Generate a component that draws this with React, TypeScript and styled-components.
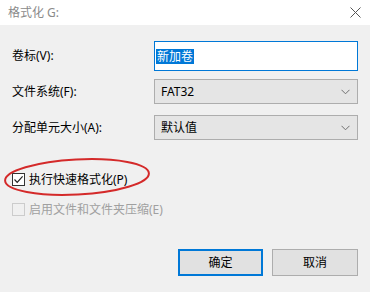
import React, {FC} from 'react';
import styled, {createGlobalStyle} from "styled-components";

const GlobalStyle = createGlobalStyle`
  html, body {
    margin: 0;
    padding: 0;
    background: #f0f0f0;
  }
  body {
    font-family: "Noto Sans", "Noto Sans CJK SC", sans-serif;
    font-size: 12px;
    color: #000;
  }
`

const Dialog = styled.div`
  position: relative;
  width: 370px;
  height: 292px;
  overflow: hidden;
  background: #f0f0f0;
`

const TitleBar = styled.div`
  height: 25px;
  background: #fff;
  display: flex;
  align-items: center;
  justify-content: space-between;
  padding: 0 9px 0 8px;
  color: #8a8a8a;
  font-size: 12px;
  line-height: 1;
`

const Content = styled.div`
  padding: 16px 12px 0 12px;
  display: flex;
  flex-direction: column;
`

const FieldRow = styled.div<{ $top: number, $h: number }>`
  display: grid;
  grid-template-columns: 142px 1fr;
  align-items: center;
  margin-top: ${p => p.$top}px;
  height: ${p => p.$h}px;
`

const Label = styled.span`
  line-height: 1;
`

const TextInput = styled.div`
  height: 30px;
  box-sizing: border-box;
  border: 1px solid #0078d7;
  background: #fff;
  display: flex;
  align-items: center;
  padding-left: 1px;
`

const Selected = styled.span`
  background: #0078d7;
  color: #fff;
  font-size: 12px;
  line-height: 15px;
  padding: 0 1px;
`

const Combo = styled.div`
  height: 25px;
  box-sizing: border-box;
  border: 1px solid #adadad;
  background: #e5e5e5;
  display: flex;
  align-items: center;
  justify-content: space-between;
  padding: 0 7px 0 6px;
  line-height: 1;
`

const CheckRow = styled.div<{ $top: number, $disabled?: boolean }>`
  display: flex;
  align-items: center;
  gap: 4px;
  margin-top: ${p => p.$top}px;
  color: ${p => p.$disabled ? '#a0a0a0' : '#000'};
  line-height: 1;
`

const Box = styled.span<{ $disabled?: boolean }>`
  width: 13px;
  height: 13px;
  box-sizing: border-box;
  border: 1px solid ${p => p.$disabled ? '#cccccc' : '#333'};
  background: ${p => p.$disabled ? '#f0f0f0' : '#fff'};
  display: flex;
  align-items: center;
  justify-content: center;
`

const Buttons = styled.div`
  display: flex;
  justify-content: flex-end;
  gap: 9px;
  margin-top: 33px;
`

const Button = styled.div<{ $primary?: boolean }>`
  width: ${p => p.$primary ? 85 : 86}px;
  height: 27px;
  box-sizing: border-box;
  border: ${p => p.$primary ? '2px solid #0078d7' : '1px solid #adadad'};
  background: #e1e1e1;
  display: flex;
  align-items: center;
  justify-content: center;
  line-height: 1;
`

const Annotation = styled.svg`
  position: absolute;
  left: 0;
  top: 150px;
  pointer-events: none;
`

const Chevron: FC = () => (
    <svg width="9" height="6" viewBox="0 0 9 6">
        <path d="M0.5 0.8 L4.5 4.8 L8.5 0.8" fill="none" stroke="#707070" strokeWidth="1"/>
    </svg>
)

const App: FC = () => {
    return <>
        <GlobalStyle/>
        <Dialog>
            <TitleBar>
                <span>格式化 G:</span>
                <svg width="11" height="11" viewBox="0 0 11 11">
                    <path d="M0.5 0.5 L10.5 10.5 M10.5 0.5 L0.5 10.5" stroke="#555" strokeWidth="1"/>
                </svg>
            </TitleBar>
            <Content>
                <FieldRow $top={0} $h={30}>
                    <Label>卷标(V):</Label>
                    <TextInput><Selected>新加卷</Selected></TextInput>
                </FieldRow>
                <FieldRow $top={8} $h={25}>
                    <Label>文件系统(F):</Label>
                    <Combo><span>FAT32</span><Chevron/></Combo>
                </FieldRow>
                <FieldRow $top={11} $h={25}>
                    <Label>分配单元大小(A):</Label>
                    <Combo><span>默认值</span><Chevron/></Combo>
                </FieldRow>
                <CheckRow $top={33}>
                    <Box>
                        <svg width="11" height="11" viewBox="0 0 11 11">
                            <path d="M1.5 5.5 L4.2 8.3 L9.6 2.4" fill="none" stroke="#222" strokeWidth="1.2"/>
                        </svg>
                    </Box>
                    <span>执行快速格式化(P)</span>
                </CheckRow>
                <CheckRow $top={17} $disabled>
                    <Box $disabled/>
                    <span>启用文件和文件夹压缩(E)</span>
                </CheckRow>
                <Buttons>
                    <Button $primary>确定</Button>
                    <Button>取消</Button>
                </Buttons>
            </Content>
            <Annotation width="160" height="55" viewBox="0 0 160 55">
                <ellipse cx="77" cy="27" rx="72" ry="17.5" fill="none" stroke="#d42a2a" strokeWidth="2"
                         transform="rotate(-3 77 27)"/>
            </Annotation>
        </Dialog>
    </>
};
export default App;
